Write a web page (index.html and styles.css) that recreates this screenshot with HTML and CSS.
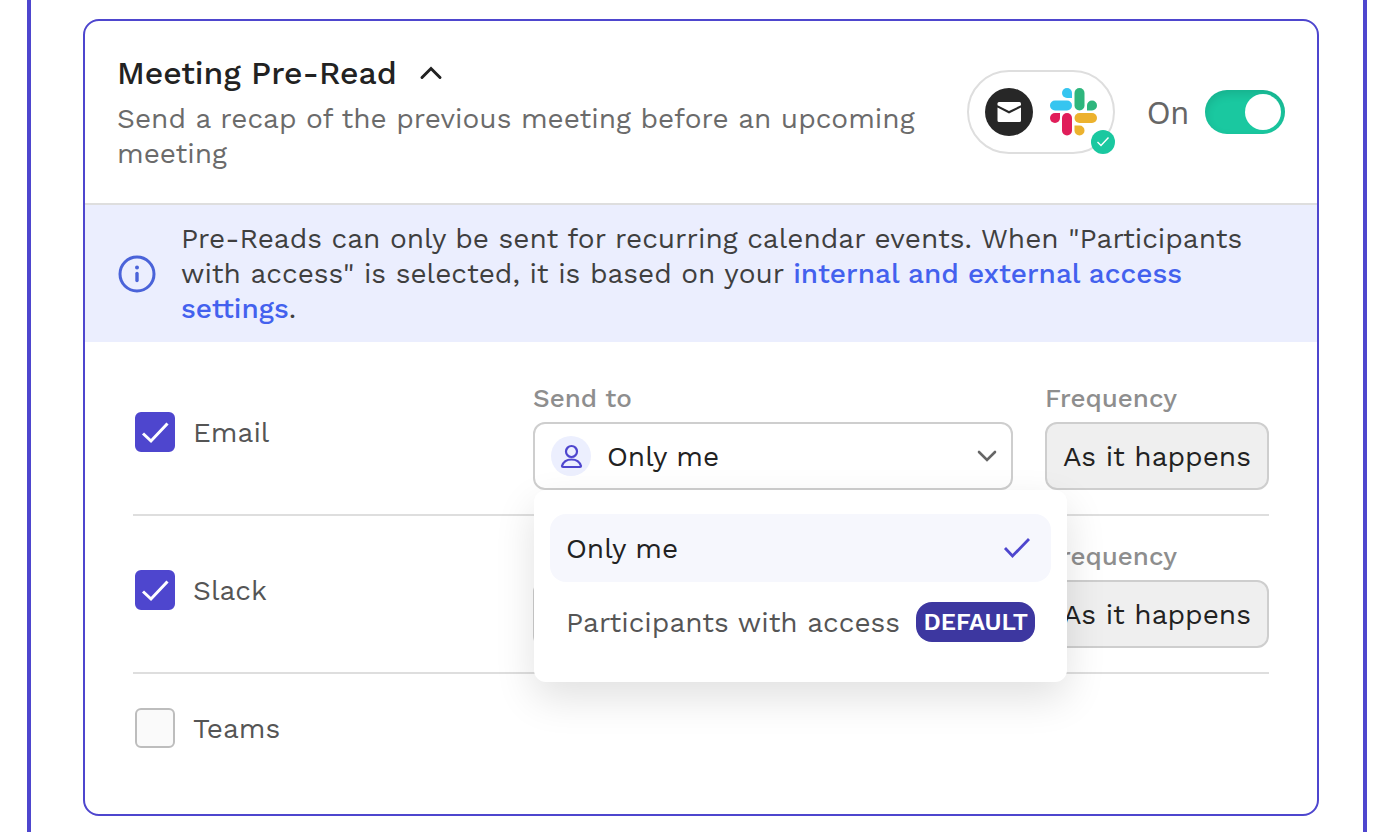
FILE: index.html
```html
<!DOCTYPE html>
<html lang="en">
  <head>
    <meta charset="UTF-8" />
    <meta name="viewport" content="width=device-width, initial-scale=1.0" />
    <title>Meeting Pre-Read</title>
    <link rel="stylesheet" href="styles.css">
  </head>
  <body>
    <main class="frame">
      <section class="card" aria-labelledby="card-title">
        <header class="card-header">
          <div class="card-intro">
            <h2 class="card-title">
              <button class="title-button" id="card-title" aria-expanded="true">
                Meeting Pre-Read
                <svg class="title-chevron" viewBox="0 0 24 24" aria-hidden="true">
                  <path d="M3 16.500L12 7.500l9 9" />
                </svg>
              </button>
            </h2>
            <p class="card-description">
              Send a recap of the previous meeting before an upcoming meeting
            </p>
          </div>

          <div class="channels">
            <svg class="channel-icon" viewBox="0 0 48 48" aria-hidden="true">
              <circle cx="24" cy="24" r="24" fill="#272727" />
              <path d="M14 14h20.500q1.500 0 1.500 1.500V17.200L24 23 12.500 17.200V15.500q0-1.500 1.500-1.500z" fill="#fff" />
              <path d="M12.500 19.600L24 25.400l12-5.800V32.500q0 1.500-1.500 1.500H14q-1.500 0-1.500-1.500z" fill="#fff" />
            </svg>
            <svg class="channel-icon" viewBox="0 0 48 48" aria-hidden="true">
              <g fill="#36c5f0">
                <path d="M18 0a5 5 0 1 0 0 10h5V5a5 5 0 0 0-5-5z" />
                <rect x="1" y="12.500" width="22" height="10" rx="5" />
              </g>
              <g fill="#2eb67d">
                <rect x="25.500" y="0" width="10" height="22.500" rx="5" />
                <path d="M48 17.500a5 5 0 1 0-10 0v5h5a5 5 0 0 0 5-5z" />
              </g>
              <g fill="#ecb22e">
                <rect x="25.500" y="25" width="22.500" height="10" rx="5" />
                <path d="M30.500 47.500a5 5 0 1 0 0-10h-5v5a5 5 0 0 0 5 5z" />
              </g>
              <g fill="#e01e5a">
                <rect x="13" y="25" width="10" height="22.500" rx="5" />
                <path d="M1 30a5 5 0 1 0 10 0v-5H6a5 5 0 0 0-5 5z" />
              </g>
            </svg>
            <svg class="channels-badge" viewBox="0 0 24 24" aria-hidden="true">
              <circle cx="12" cy="12" r="12" fill="#1ac8a0" />
              <path d="M6.500 12l3.500 3.500 7.500-8" fill="none" stroke="#fff" stroke-width="1.400" />
            </svg>
          </div>

          <label class="switch">
            <span>On</span>
            <input class="switch-input" type="checkbox" role="switch" checked />
          </label>
        </header>

        <div class="notice">
          <svg class="notice-icon" viewBox="0 0 38 38" aria-hidden="true">
            <circle cx="19" cy="19" r="17" fill="none" stroke="#4a63d9" stroke-width="3" />
            <circle cx="19" cy="12.500" r="2" fill="#4a63d9" />
            <path d="M19 18.500v7" stroke="#4a63d9" stroke-width="3.400" stroke-linecap="round" />
          </svg>
          <p class="notice-text">
            Pre-Reads can only be sent for recurring calendar events. When "Participants
            with access" is selected, it is based on your
            <a class="notice-link" href="#">internal and external access settings</a>.
          </p>
        </div>

        <div class="rows">
          <div class="row">
            <label class="check">
              <input class="check-input" type="checkbox" checked />
              <svg class="check-mark" viewBox="0 0 40 40" aria-hidden="true"><path d="M8 21.500l8 7.500 16.500-17.500" /></svg>
              <span>Email</span>
            </label>
            <div class="field">
              <label class="field-label" for="email-to">Send to</label>
              <div class="select-wrap">
                <select class="select select-person" id="email-to">
                  <option>Only me</option>
                  <option>Participants with access</option>
                </select>
                <svg class="person" viewBox="0 0 40 40" aria-hidden="true">
                  <circle class="person-back" cx="20" cy="20" r="20" />
                  <circle cx="20.500" cy="15.500" r="5.500" />
                  <path d="M11 30q2-6.500 9.500-6.500t9.500 6.500q0 1-1 1H12q-1 0-1-1z" />
                </svg>
                <svg class="select-chevron" viewBox="0 0 20 20" aria-hidden="true"><path d="M2 6l8 8 8-8" /></svg>
                <ul class="menu" role="listbox" aria-label="Send to">
                  <li role="option" aria-selected="true">
                    <button class="menu-item selected">
                      <span>Only me</span>
                      <svg class="menu-check" viewBox="0 0 28 28" aria-hidden="true"><path d="M2 14l7.500 8L26 5" /></svg>
                    </button>
                  </li>
                  <li role="option" aria-selected="false">
                    <button class="menu-item">
                      <span>Participants with access</span>
                      <span class="tag">DEFAULT</span>
                    </button>
                  </li>
                </ul>
              </div>
            </div>
            <div class="field field-frequency">
              <label class="field-label" for="email-frequency">Frequency</label>
              <select class="select" id="email-frequency" disabled>
                <option>As it happens</option>
              </select>
            </div>
          </div>

          <div class="row">
            <label class="check">
              <input class="check-input" type="checkbox" checked />
              <svg class="check-mark" viewBox="0 0 40 40" aria-hidden="true"><path d="M8 21.500l8 7.500 16.500-17.500" /></svg>
              <span>Slack</span>
            </label>
            <div class="field">
              <select class="select select-person" aria-label="Send to">
                <option>Only me</option>
                <option>Participants with access</option>
              </select>
            </div>
            <div class="field field-frequency">
              <label class="field-label" for="slack-frequency">Frequency</label>
              <select class="select" id="slack-frequency" disabled>
                <option>As it happens</option>
              </select>
            </div>
          </div>

          <div class="row">
            <label class="check check-single">
              <input class="check-input" type="checkbox" />
              <span>Teams</span>
            </label>
          </div>
        </div>
      </section>
    </main>
  </body>
</html>
```

FILE: styles.css
```css
* {
  padding: 0;
  margin: 0;
  box-sizing: border-box;
}

body {
  background-color: #fff;
  color: #555;
  font-family: "Work Sans", Inter, sans-serif;
  font-size: 28px;
  line-height: 35px;
}

button,
select {
  font: inherit;
  color: inherit;
  border: none;
  background: none;
}

.frame {
  min-height: 100vh;
  margin: 0 31px 0 27px;
  padding: 19px 44px 16px 52px;
  border: solid #4e46ce;
  border-width: 0 4px;
}

.card {
  border: 2px solid #4e46ce;
  border-radius: 16px;
}

.card-header {
  display: flex;
  align-items: center;
  padding: 32px;
  border-bottom: 2px solid #dedede;
}

.card-intro {
  flex: 1;
  padding-right: 32px;
}

.card-title {
  font-size: 32px;
  font-weight: 500;
  line-height: 40px;
  margin-bottom: 8px;
}

.title-button {
  display: flex;
  align-items: center;
  gap: 22px;
  color: #222;
  cursor: pointer;
}

.title-chevron {
  width: 24px;
  height: 24px;
  fill: none;
  stroke: currentColor;
  stroke-width: 3;
  stroke-linecap: round;
}

.card-description {
  color: #6b6b6b;
}

.channels {
  position: relative;
  display: flex;
  gap: 16px;
  padding: 16px;
  border: 2px solid #dedede;
  border-radius: 42px;
}

.channel-icon {
  width: 48px;
  height: 48px;
}

.channels-badge {
  position: absolute;
  right: -2px;
  bottom: -2px;
  width: 24px;
  height: 24px;
}

.switch {
  display: flex;
  align-items: center;
  gap: 16px;
  margin-left: 32px;
  font-family: "Noto Sans", sans-serif;
  font-size: 30px;
  color: #666;
}

.switch-input {
  appearance: none;
  width: 80px;
  height: 44px;
  padding: 4px;
  border-radius: 22px;
  background-color: #1ac8a0;
  box-shadow: inset 0 4px 10px rgba(0, 0, 0, 0.12);
  cursor: pointer;
}

.switch-input::before {
  content: "";
  display: block;
  width: 36px;
  height: 36px;
  border-radius: 50%;
  background-color: #fff;
}

.switch-input:checked::before {
  margin-left: auto;
}

.notice {
  display: flex;
  align-items: center;
  gap: 25px;
  padding: 16px 33px;
  background-color: #ebeefe;
  color: #3f3f3f;
}

.notice-icon {
  flex: none;
  width: 38px;
  height: 38px;
}

.notice-link {
  color: #4361ee;
  font-weight: 500;
  text-decoration: none;
}

.rows {
  padding: 16px 48px 32px;
}

.row {
  display: flex;
  gap: 32px;
  padding: 24px 0;
}

.row + .row {
  border-top: 2px solid #dedede;
}

.check {
  position: relative;
  flex: 1;
  display: flex;
  align-items: center;
  gap: 18px;
  height: 100px;
  padding-left: 2px;
}

.check-single {
  height: 60px;
}

.check-input {
  appearance: none;
  width: 40px;
  height: 40px;
  border: 2px solid #bdbdbd;
  border-radius: 6px;
  background-color: #fafafa;
}

.check-input:checked {
  border-color: #4e46ce;
  background-color: #4e46ce;
}

.check-mark {
  position: absolute;
  left: 2px;
  width: 40px;
  height: 40px;
  fill: none;
  stroke: #fff;
  stroke-width: 3;
  pointer-events: none;
}

.field {
  display: flex;
  flex-direction: column;
  justify-content: flex-end;
  gap: 8px;
  width: 480px;
}

.field-frequency {
  width: 224px;
}

.field-label {
  color: #8e8e8e;
  font-size: 26px;
  font-weight: 500;
  line-height: 32px;
}

.select-wrap {
  position: relative;
}

.select {
  appearance: none;
  width: 100%;
  height: 68px;
  padding: 0 16px;
  border: 2px solid #cecece;
  border-radius: 12px;
  background-color: #fff;
  color: #222;
}

.select:disabled {
  background-color: #efefef;
  opacity: 1;
}

.select-person {
  padding-left: 72px;
}

.person {
  position: absolute;
  top: 14px;
  left: 18px;
  width: 40px;
  height: 40px;
  fill: none;
  stroke: #4e46ce;
  stroke-width: 2.2;
  pointer-events: none;
}

.person-back {
  fill: #eceffe;
  stroke: none;
}

.select-chevron {
  position: absolute;
  top: 24px;
  right: 16px;
  width: 20px;
  height: 20px;
  fill: none;
  stroke: #666;
  stroke-width: 2.6;
  stroke-linecap: round;
  pointer-events: none;
}

/* open list hangs under the field and runs past its right edge */
.menu {
  position: absolute;
  z-index: 1;
  top: 100%;
  left: 1px;
  display: flex;
  flex-direction: column;
  gap: 6px;
  width: 533px;
  padding: 24px 16px 26px;
  border-radius: 12px;
  background-color: #fff;
  box-shadow: 0 16px 40px rgba(0, 0, 0, 0.12);
  list-style: none;
}

.menu-item {
  display: flex;
  align-items: center;
  justify-content: space-between;
  width: 100%;
  height: 68px;
  padding: 0 16px;
  border-radius: 16px;
  white-space: nowrap;
  cursor: pointer;
}

.menu-item.selected {
  background-color: #f6f7fd;
  color: #222;
}

.menu-check {
  width: 28px;
  height: 28px;
  margin-right: 4px;
  fill: none;
  stroke: #4e46ce;
  stroke-width: 2.8;
}

.tag {
  padding: 0 7px;
  border-radius: 16px;
  background-color: #3d37a0;
  color: #fff;
  font-size: 24px;
  font-weight: 600;
  line-height: 40px;
}
```
